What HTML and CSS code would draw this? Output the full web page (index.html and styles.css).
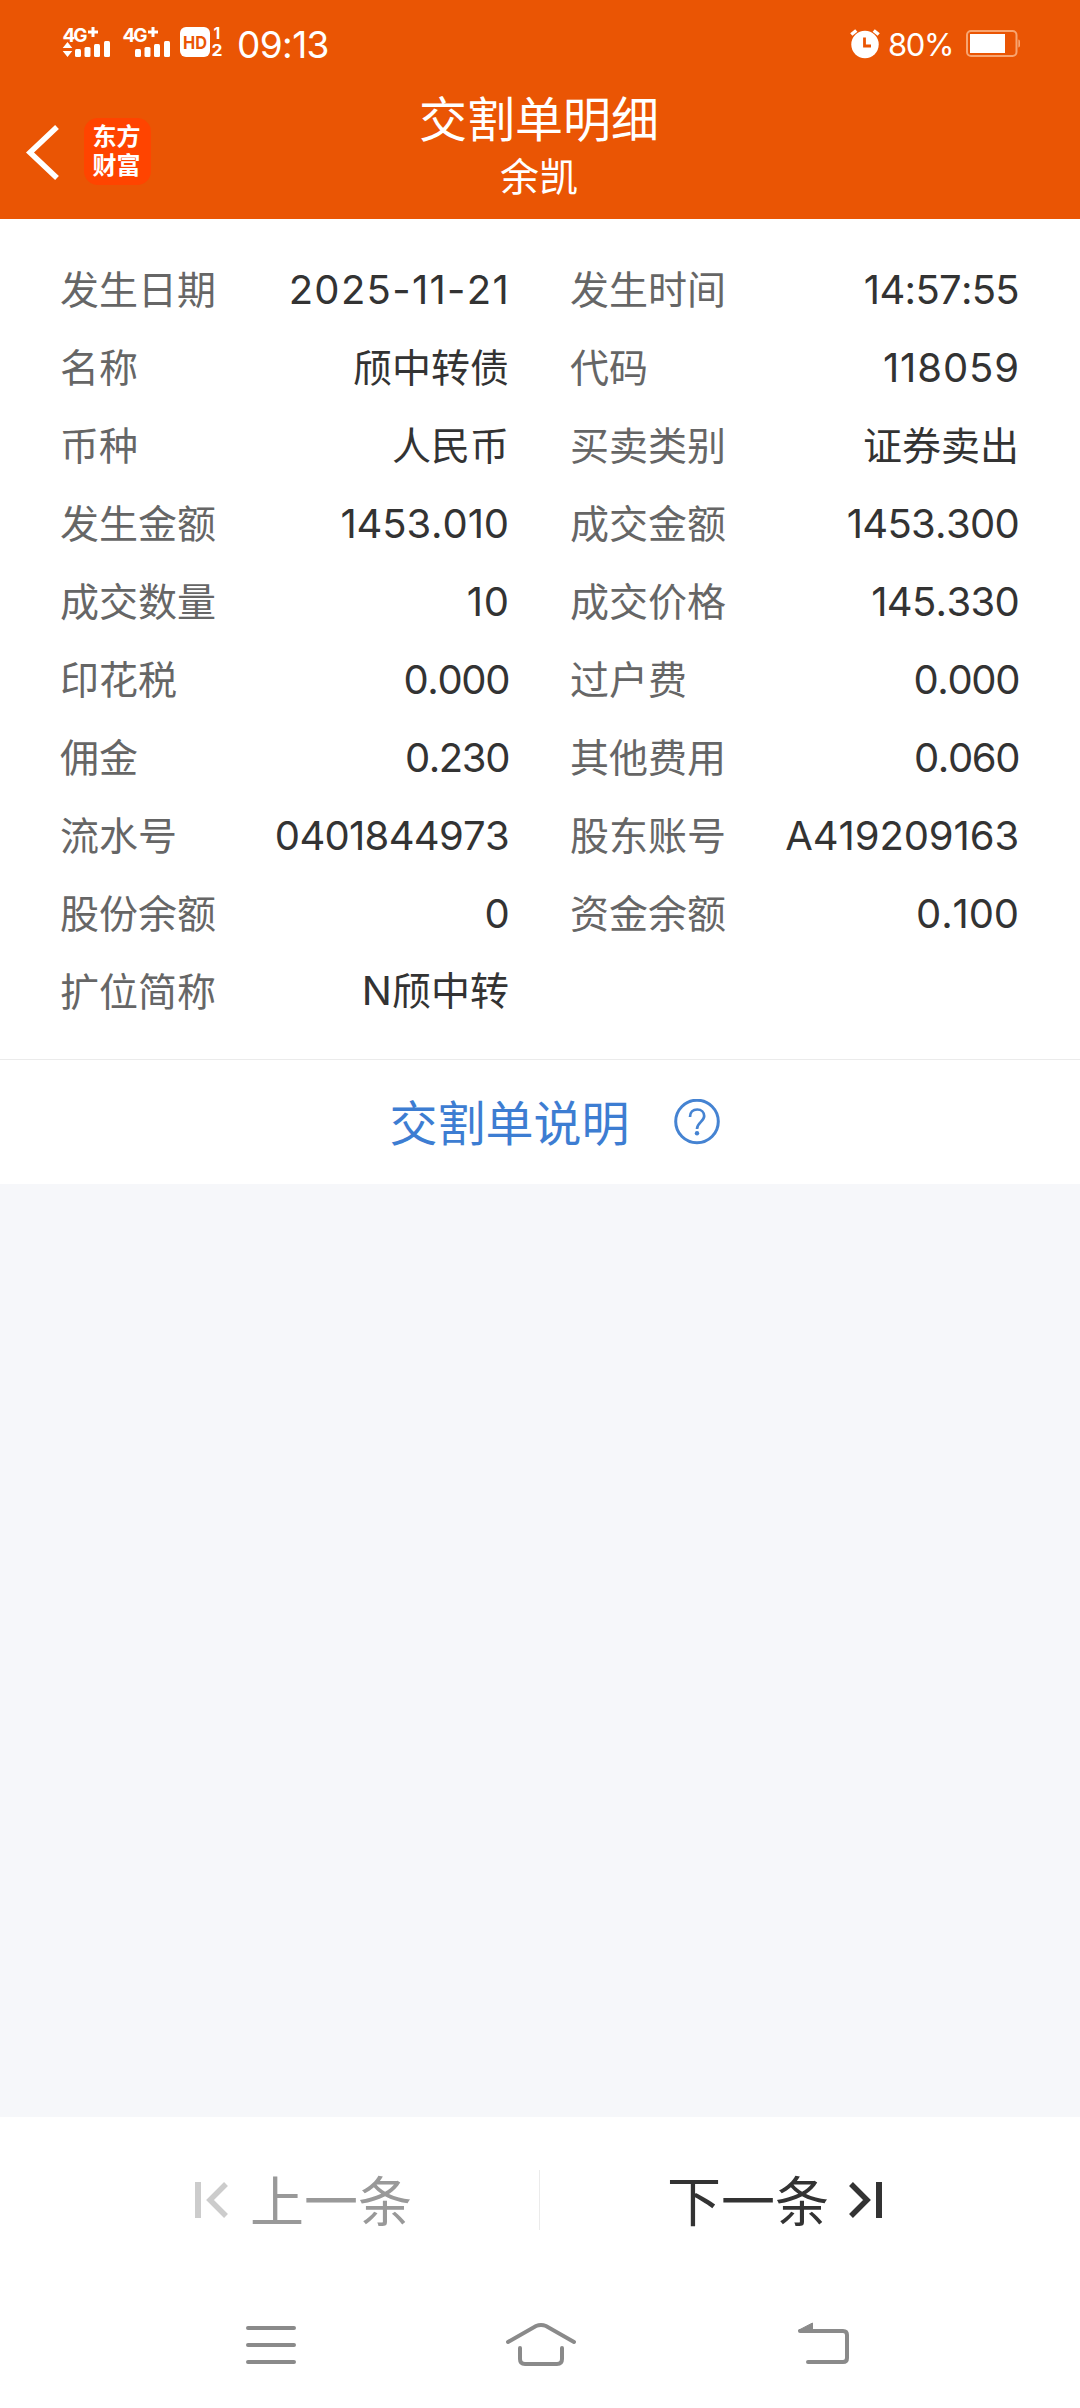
FILE: index.html
```html
<!DOCTYPE html>
<html lang="zh-CN">
<head>
    <meta charset="UTF-8">
    <meta name="viewport" content="width=device-width, initial-scale=1.0">
    <title>交割单明细</title>
    <link rel="stylesheet" href="styles.css">
</head>
<body>
    <div class="page">
        <header class="header">
            <div class="status-bar">
                <svg class="signal" width="162" height="40" viewBox="62 24 162 40" fill="#fff">
                    <text class="net" x="62.5" y="42" textLength="25">4G</text>
                    <path d="M88 30.5h10v3H88zM91.500 27h3v10h-3z"/>
                    <path d="M67.5 42l4.8 6h-9.6zM67.5 57l4.8-6h-9.6z"/>
                    <rect x="75" y="49" width="6" height="8" rx="1.5"/>
                    <rect x="84.500" y="47" width="6" height="10" rx="1.5"/>
                    <rect x="94" y="44" width="6" height="13" rx="1.5"/>
                    <rect x="104" y="41" width="6" height="16" rx="1.5"/>

                    <text class="net" x="122.500" y="42" textLength="25">4G</text>
                    <path d="M148 30.500h10v3h-10zM151.500 27h3v10h-3z"/>
                    <rect x="135" y="49" width="6" height="8" rx="1.5"/>
                    <rect x="144.500" y="47" width="6" height="10" rx="1.5"/>
                    <rect x="154" y="44" width="6" height="13" rx="1.5"/>
                    <rect x="164" y="41" width="6" height="16" rx="1.5"/>

                    <rect x="180" y="27" width="30" height="30" rx="6"/>
                    <text class="hd" x="183" y="49" textLength="24" lengthAdjust="spacingAndGlyphs">HD</text>
                    <text class="sim" x="213.500" y="38.500">1</text>
                    <text class="sim" x="211.500" y="56" textLength="11" lengthAdjust="spacingAndGlyphs">2</text>
                </svg>
                <span class="time">09:13</span>
                <svg class="alarm" width="32" height="32" viewBox="850 27 32 32">
                    <circle cx="866" cy="43.500" r="13.700" fill="#fff"/>
                    <path d="M852.300 33.500l5-4M879.700 33.500l-5-4" stroke="#fff" stroke-width="3.500"/>
                    <path d="M865.500 36.500v8.500h6.500" fill="none" stroke="#ea5504" stroke-width="2.800"/>
                </svg>
                <span class="percent">80%</span>
                <svg class="battery" width="56" height="28" viewBox="965 30 56 28">
                    <rect x="967" y="31" width="49.500" height="25" rx="4" fill="none" stroke="#f8a571" stroke-width="2"/>
                    <path d="M1018.300 39.500q1.700 0 1.700 2v4q0 2-1.700 2z" fill="#f8a571"/>
                    <rect x="970" y="34" width="35" height="19" fill="#fff"/>
                </svg>
            </div>
            <div class="title-bar">
                <div class="title-left">
                    <svg width="36" height="60" viewBox="25 121 36 60">
                        <path d="M57 126L30 151.500L57 177" fill="none" stroke="#fff" stroke-width="5.500"/>
                    </svg>
                    <div class="logo"><span>东方</span><span>财富</span></div>
                </div>
                <div class="title-text">
                    <h1>交割单明细</h1>
                    <p>余凯</p>
                </div>
            </div>
        </header>

        <section class="detail">
            <div class="item"><span>发生日期</span><b class="num date">2025-11-21</b></div>
            <div class="item"><span>发生时间</span><b class="num">14:57:55</b></div>
            <div class="item"><span>名称</span><b>颀中转债</b></div>
            <div class="item"><span>代码</span><b class="num code">118059</b></div>
            <div class="item"><span>币种</span><b>人民币</b></div>
            <div class="item"><span>买卖类别</span><b>证券卖出</b></div>
            <div class="item"><span>发生金额</span><b class="num wide">1453.010</b></div>
            <div class="item"><span>成交金额</span><b class="num">1453.300</b></div>
            <div class="item"><span>成交数量</span><b class="num code">10</b></div>
            <div class="item"><span>成交价格</span><b class="num">145.330</b></div>
            <div class="item"><span>印花税</span><b class="num tight">0.000</b></div>
            <div class="item"><span>过户费</span><b class="num tight">0.000</b></div>
            <div class="item"><span>佣金</span><b class="num tight">0.230</b></div>
            <div class="item"><span>其他费用</span><b class="num tight">0.060</b></div>
            <div class="item"><span>流水号</span><b class="num">0401844973</b></div>
            <div class="item"><span>股东账号</span><b class="num wide">A419209163</b></div>
            <div class="item"><span>股份余额</span><b class="num">0</b></div>
            <div class="item"><span>资金余额</span><b class="num wide">0.100</b></div>
            <div class="item"><span>扩位简称</span><b><i class="latin">N</i>颀中转</b></div>
        </section>

        <div class="explain">
            <span>交割单说明</span>
            <svg width="46" height="46" viewBox="0 0 46 46" fill="none" stroke="#4583d2">
                <circle cx="23" cy="22.500" r="21.300" stroke-width="3"/>
                <path d="M16 18c0-4.500 3-7.500 7.200-7.500s7 2.800 7 6.600c0 5.400-7.200 6.400-7.200 13" stroke-width="2.700"/>
                <circle cx="23" cy="34.300" r="2.200" fill="#4583d2" stroke="none"/>
            </svg>
        </div>

        <main class="blank"></main>

        <footer class="pager">
            <div class="prev">
                <svg width="34" height="38" viewBox="0 0 34 38" fill="none" stroke="#ccc" stroke-width="6">
                    <path d="M3 1v36"/>
                    <path d="M31 3L15 19L31 35" stroke-width="5.500"/>
                </svg>
                <span>上一条</span>
            </div>
            <div class="next">
                <span>下一条</span>
                <svg width="34" height="38" viewBox="0 0 34 38" fill="none" stroke="#333" stroke-width="6">
                    <path d="M31 1v36"/>
                    <path d="M3 3L19 19L3 35" stroke-width="5.500"/>
                </svg>
            </div>
        </footer>

        <nav class="sys-nav">
            <svg width="80" height="50" viewBox="231 2320 80 50">
                <path d="M248 2328h46M248 2345h46M248 2362h46"/>
            </svg>
            <svg width="80" height="50" viewBox="501 2320 80 50">
                <path d="M508 2342l28-16q5-2 10 0l28 16"/>
                <path d="M520 2348v11q0 5 5 5h32q5 0 5-5v-11"/>
            </svg>
            <svg width="80" height="50" viewBox="771 2320 80 50">
                <path d="M808 2362h35q4 0 4-4v-23q0-4-4-4h-43"/>
                <path class="solid" d="M799 2330l13.500-7v8h-13.500z"/>
            </svg>
        </nav>
    </div>
</body>
</html>
```
FILE: styles.css
```css
* {
    box-sizing: border-box;
}
body {
    margin: 0;
    background: #fff;
    font-family: "Noto Sans CJK SC", sans-serif;
}
svg {
    display: block;
    flex-shrink: 0;
}
.page {
    width: 1080px;
    height: 2408px;
    display: flex;
    flex-direction: column;
}
.header {
    height: 219px;
    background: #ea5504;
    color: #fff;
}
.status-bar {
    height: 88px;
    display: flex;
    align-items: center;
    padding: 0 59px 0 62px;
    font-family: Inter, sans-serif;
}
.net {
    font-size: 19px;
    font-weight: 700;
}
.hd {
    font-size: 18px;
    font-weight: 700;
    fill: #ea5504;
}
.sim {
    font-size: 15.5px;
    font-weight: 700;
}
.time {
    margin-left: 13px;
    font-size: 37px;
    letter-spacing: -0.6px;
}
.alarm {
    margin-left: auto;
}
.percent {
    width: 67px;
    margin: 0 10px 0 7px;
    font-size: 31px;
    letter-spacing: -1.4px;
    white-space: nowrap;
}
.title-bar {
    height: 131px;
    display: grid;
    grid-template-columns: 200px 1fr 202px;
}
.title-left {
    display: flex;
    align-items: center;
    gap: 23px;
    padding-left: 25px;
    height: 127px;
}
.logo {
    display: flex;
    flex-direction: column;
    align-items: center;
    width: 67px;
    height: 67px;
    padding: 2px 2px 0 0;
    border-radius: 14px;
    background: #ff4400;
    font-size: 24px;
    font-weight: 700;
    line-height: 29px;
}
.title-text {
    margin-top: -2px;
    text-align: center;
}
.title-text h1 {
    margin: 0;
    font-size: 48px;
    font-weight: 400;
    line-height: 60px;
}
.title-text p {
    margin: 0;
    font-size: 39px;
    line-height: 56px;
}
.detail {
    height: 841px;
    display: grid;
    grid-template-columns: 449px 449px;
    grid-auto-rows: 78px;
    column-gap: 61px;
    padding: 29px 60px 0;
    border-bottom: 1px solid #ebebeb;
}
.item {
    display: flex;
    justify-content: space-between;
    align-items: center;
    height: 78px;
    font-size: 39px;
    line-height: 78px;
    color: #666;
}
.item b {
    font-weight: 400;
    color: #333;
}
.item .num {
    padding-top: 6px;
    font-family: Inter, sans-serif;
    font-size: 40px;
    font-kerning: none;
    letter-spacing: -0.7px;
}
.item .tight {
    letter-spacing: -1.4px;
}
.item .wide {
    letter-spacing: -0.1px;
}
.item .code {
    margin-right: -1px;
    letter-spacing: 0.9px;
}
.item .date {
    margin-right: -1px;
    letter-spacing: 1.3px;
}
.latin {
    font-family: Inter, sans-serif;
    font-style: normal;
    font-size: 40px;
}
.explain {
    height: 124px;
    display: flex;
    justify-content: center;
    align-items: center;
    gap: 44px;
    padding-left: 29px;
    font-size: 48px;
    color: #3d7dd2;
}
.explain span {
    padding-bottom: 4px;
}
.blank {
    flex: 1;
    background: #f6f7fa;
}
.pager {
    height: 165px;
    display: flex;
    align-items: center;
    font-size: 54px;
}
.prev, .next {
    width: 540px;
    height: 60px;
    display: flex;
    align-items: center;
    gap: 21px;
}
.pager span {
    padding-bottom: 3px;
}
.prev {
    padding-left: 195px;
    border-right: 1px solid #ebebeb;
    color: #999;
}
.next {
    gap: 19px;
    padding-left: 127px;
    color: #333;
}
.sys-nav {
    height: 126px;
    display: flex;
    align-items: center;
    gap: 190px;
    padding-left: 231px;
}
.sys-nav path {
    fill: none;
    stroke: #8a8a8a;
    stroke-width: 4;
    stroke-linecap: round;
}
.sys-nav .solid {
    fill: #8a8a8a;
    stroke-width: 1;
}
```
